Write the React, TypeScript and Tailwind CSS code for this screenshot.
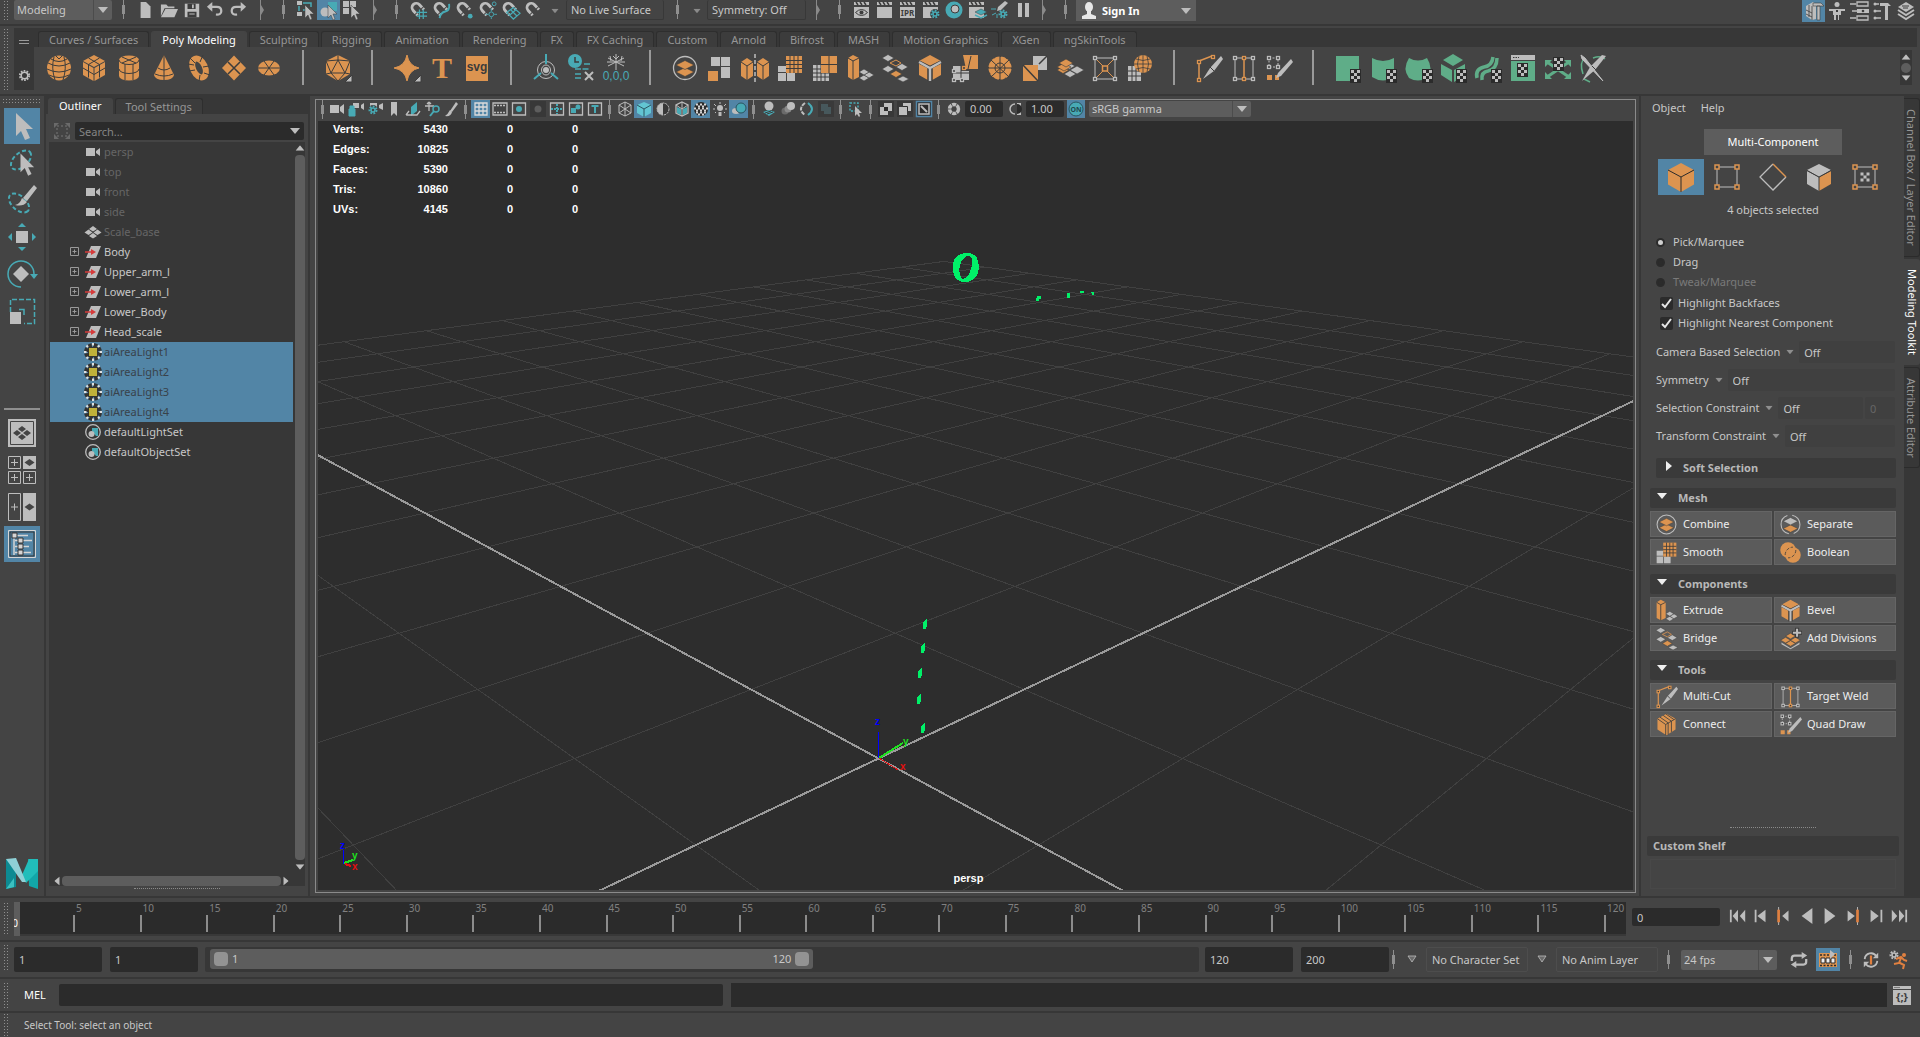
import { useState } from "react";
import type { ReactNode } from "react";
import clsx from "clsx";

const W = "#bdbdbd";
const O = "#dc9450";
const T = "#48aab5";
const G = "#5fad88";
const K = "#3c3c3c";

/* ---------- small building blocks ---------- */

function Svg({ s = 28, vb = 28, className, children }: { s?: number; vb?: number; className?: string; children: ReactNode }) {
  return (
    <svg width={s} height={s} viewBox={`0 0 ${vb} ${vb}`} className={clsx("shrink-0 overflow-visible", className)} fill="none" aria-hidden="true">
      {children}
    </svg>
  );
}

function Grip({ className }: { className?: string }) {
  return (
    <div
      className={clsx(
        "shrink-0 bg-[radial-gradient(#8f8f8f_1px,transparent_1px)] bg-[length:3px_3px]",
        className ?? "ml-[3px] w-[5px] self-stretch",
      )}
    />
  );
}

function Sep({ className }: { className?: string }) {
  return (
    <div className={clsx("flex shrink-0 flex-col items-center justify-center", className)}>
      <div className="h-[5px] w-px bg-[#8f8f8f]" />
      <div className="h-[9px] w-[3px] bg-[#8f8f8f]" />
      <div className="h-[5px] w-px bg-[#8f8f8f]" />
    </div>
  );
}

function Expand({ className }: { className?: string }) {
  return (
    <Svg s={20} vb={20} className={className}>
      <path d="M8.500 0v20" stroke="#8a8a8a" />
      <path d="M9 5l3 5-3 5z" fill="#8a8a8a" />
    </Svg>
  );
}

function Caret({ className, color = W }: { className?: string; color?: string }) {
  return (
    <svg width="10" height="6" viewBox="0 0 10 6" className={clsx("pointer-events-none shrink-0", className)} aria-hidden="true">
      <path d="M0 0h10L5 6z" fill={color} />
    </svg>
  );
}

function Dropdown({ label, value, className }: { label: string; value: string; className: string }) {
  return (
    <div className={clsx("grid shrink-0 grid-cols-[1fr_18px] items-center overflow-hidden rounded-[2px] bg-[#5d5d5d]", className)}>
      <select aria-label={label} className="h-full w-full min-w-0 appearance-none border-r border-[#4c4c4c] bg-transparent pl-[3px] outline-none">
        <option>{value}</option>
      </select>
      <Caret className="justify-self-center" />
    </div>
  );
}

function Field({ label, value, className }: { label: string; value: string; className: string }) {
  return <input aria-label={label} defaultValue={value} className={clsx("shrink-0 rounded-[2px] bg-[#2b2b2b] px-[5px] outline-none", className)} />;
}

function Tool({ label, on, className, children }: { label: string; on?: boolean; className: string; children: ReactNode }) {
  return (
    <button type="button" aria-label={label} className={clsx("flex shrink-0 items-center justify-center", on && "bg-[#5285a6]", className)}>
      {children}
    </button>
  );
}

type Item = [string, ReactNode, boolean?] | null;

/* ---------- icon parts ---------- */

const pointer = <path d="M9 5v13l3-3 2 5 2-1-2-5h4z" fill={W} stroke={K} strokeWidth=".5" />;
const magnet = (
  <g transform="rotate(-42 8 8)" stroke={W} strokeWidth="3">
    <path d="M4 11V7a4.500 4.500 0 0 1 9 0v4" />
    <path d="M4 12v2M13 12v2" />
  </g>
);
const slate = (
  <>
    <path d="M2 2h15v3H2z" fill={W} />
    <path d="M4 2l2 3M8 2l2 3M12 2l2 3" stroke={K} strokeWidth="1.500" />
    <path d="M2 7h15v11H2z" fill={W} />
  </>
);
const gear = (cx: number, cy: number, c: string, r = 3) => (
  <>
    <circle cx={cx} cy={cy} r={r + 1} stroke={c} strokeWidth="2" strokeDasharray="1.800 1.350" />
    <circle cx={cx} cy={cy} r={r - 0.5} stroke={c} strokeWidth="1.600" />
  </>
);
const checker = (x: number, y: number, s = 3) => (
  <g>
    <path d={`M${x - 1} ${y - 1}h${s * 3 + 2}v${s * 4 + 2}h-${s * 3 + 2}z`} fill="#2b2b2b" />
    {[0, 1, 2, 3].flatMap((r) =>
      [0, 1, 2].filter((c) => (r + c) % 2 === 0).map((c) => <rect key={`${r}-${c}`} x={x + c * s} y={y + r * s} width={s} height={s} fill={W} />),
    )}
  </g>
);
const tile = (x: number, y: number, c: string, w = 6, h = 3.5) => (
  <path d={`M${x - w} ${y}L${x} ${y - h}L${x + w} ${y}L${x} ${y + h}z`} fill={c} stroke={K} strokeWidth=".6" />
);
const node = (x: number, y: number, c: string) => <rect x={x - 1.5} y={y - 1.5} width="3" height="3" stroke={c} strokeWidth="1.300" fill={K} />;
const box = (top: string, left: string, right: string) => (
  <>
    <path d="M14 1l11 6-11 6L3 7z" fill={top} />
    <path d="M3 8l10.500 6v13L3 21z" fill={left} />
    <path d="M25 8l-10.500 6v13L25 21z" fill={right} />
  </>
);
const camera = <path d="M1 4h9v8H1zM15 3v10l-4-3V6z" fill={W} />;

const art = {
  sphere: (
    <>
      <ellipse cx="14" cy="14" rx="12" ry="12.500" fill={O} />
      <path d="M3 9q11 6 22 0M2 15q12 6 24 0M4 21q10 5 20 0M9 3q-3 11 1 23M19 3q3 11-1 23M6 5q8 5 16 0M11 2l3 3 3-3" stroke={K} />
    </>
  ),
  cube: (
    <>
      {box(O, O, O)}
      <path d="M8.500 4l11 6.500v13M19.500 4l-11 6.500v13M3 14l11 6.500L25 14" stroke={K} />
    </>
  ),
  cylinder: (
    <>
      <path d="M4 6a10 4.500 0 0 1 20 0v16a10 4.500 0 0 1-20 0z" fill={O} />
      <path d="M4 6a10 4.500 0 0 0 20 0M4 15a10 4.500 0 0 0 20 0M10 10v16M18 10v16M7 3l14 6M21 3L7 9" stroke={K} />
    </>
  ),
  cone: (
    <>
      <path d="M14 1l10 20q-1 5-10 5T4 21z" fill={O} />
      <path d="M8 14q6 4 12 0M14 1v25M5 20q9 4 18 0" stroke={K} />
    </>
  ),
  torus: (
    <>
      <ellipse cx="14" cy="14" rx="6" ry="10" stroke={O} strokeWidth="6" transform="rotate(-25 14 14)" />
      <path d="M5 4l5 5M18 1l-3 7M24 12l-6 1M25 21l-6-2M14 27l1-6M4 17l6-1M3 10l6 1" stroke={K} />
    </>
  ),
  plane: (
    <>
      <path d="M14 1.500L26 14 14 26.500 2 14z" fill={O} />
      <path d="M8 8l12 12M20 8L8 20" stroke={K} strokeWidth="1.500" />
    </>
  ),
  disc: (
    <>
      <ellipse cx="14" cy="14" rx="11" ry="7.500" fill={O} />
      <path d="M3 14h22M9 7l10 14M19 7L9 21" stroke={K} />
    </>
  ),
  platonic: (
    <>
      <path d="M14 1l12 6v13l-12 7-12-7V7z" fill={O} />
      <path d="M14 1v5M2 7l12-1 12 1M2 7l5 12L14 6l7 13 5-12M7 19h14M2 20l5-1 7 8 7-8 5 1" stroke={K} />
      <path d="M28 21v7h-7z" fill={W} stroke={K} />
    </>
  ),
  star: (
    <>
      <path d="M14 1q2 11 12 13-10 2-12 13Q12 16 1 14 12 12 14 1z" fill={O} stroke={O} />
      <path d="M28 21v7h-7z" fill={W} stroke={K} />
    </>
  ),
  type: (
    <text x="14" y="24" fontSize="30" fontWeight="700" textAnchor="middle" fill={O} className="font-['Liberation_Serif',serif]">
      T
    </text>
  ),
  svg: (
    <>
      <path d="M3 2h22v25H3z" fill={O} />
      <text x="14" y="17" fontSize="12" fontWeight="700" textAnchor="middle" fill={K} className="font-['Liberation_Sans',sans-serif]">
        svg
      </text>
    </>
  ),
  pivot: (
    <>
      <circle cx="14" cy="16" r="8.500" stroke={W} />
      <ellipse cx="14" cy="16" rx="4.500" ry="5" stroke={W} />
      <circle cx="14" cy="16" r="3" fill={W} />
      <path d="M14 0v10M9 19l-7 6M19 19l7 6" stroke={T} strokeWidth="2" />
    </>
  ),
  history: (
    <>
      <circle cx="8" cy="7" r="7" fill={T} />
      <path d="M8 3v5h4" stroke={K} strokeWidth="1.500" />
      <path d="M17 10h7M8 15h14M8 20h6M8 24h6" stroke={T} strokeWidth="1.500" strokeDasharray="6 1.500" />
      <path d="M18 18l8 8M26 18l-8 8" stroke={W} strokeWidth="2" />
    </>
  ),
  freeze: (
    <>
      <path d="M14 0v16M6 4l16 8M22 4L6 12M11 2l3 3 3-3M5 8h18M8 2l1 5M20 2l-1 5" stroke={W} />
      <text x="14" y="26" fontSize="12" textAnchor="middle" fill={T} className="font-['Liberation_Sans',sans-serif]">
        0,0,0
      </text>
    </>
  ),
  combine: (
    <>
      <circle cx="14" cy="14" r="11.500" stroke={W} strokeWidth="1.300" />
      {tile(14, 18, O, 9, 4.5)}
      {tile(14, 11, O, 9, 4.5)}
    </>
  ),
  separate: (
    <>
      <circle cx="14" cy="14" r="11.500" stroke={W} strokeWidth="1.300" strokeDasharray="30 6" strokeDashoffset="-20" />
      {tile(14, 19, O, 9, 4.5)}
      {tile(14, 10, W, 9, 4.5)}
    </>
  ),
  extract: (
    <>
      <path d="M5 3h9v9H5zM15 3h9v9h-9zM15 13h9v11h-9z" fill={W} />
      <path d="M2 17h10v10H2z" fill={O} />
    </>
  ),
  mirror: (
    <>
      <path d="M14 0v28" stroke={W} strokeWidth="1.500" strokeDasharray="4 2" />
      {[0, 16].map((x) => (
        <g key={x} transform={`translate(${x} 0)`}>
          <path d="M0 8l6-4 6 4v14l-6 4-6-4z" fill={O} />
          <path d="M0 8l6 4 6-4M6 12v14" stroke={K} />
        </g>
      ))}
    </>
  ),
  smooth: (
    <>
      <path d="M2 12h8v6H2zM2 19h8v8H2zM11 19h8v8h-8z" fill={W} />
      <path d="M10 2h16v17H10z" fill={O} />
      <path d="M14 2v17M18 2v17M22 2v17M10 6.500h16M10 10.500h16M10 14.500h16" stroke={K} />
    </>
  ),
  reduce: (
    <>
      <path d="M2 11h16v16H2z" fill={W} />
      <path d="M6 11v16M10 11v16M14 11v16M2 15h16M2 19h16M2 23h16" stroke={K} />
      <path d="M10 2h16v17H10z" fill={O} />
      <path d="M18 2v17M10 10.500h16" stroke={K} />
    </>
  ),
  extrude: (
    <>
      {tile(18, 24, W, 5, 3)}
      {tile(23, 21, W, 5, 3)}
      {tile(18, 18, W, 5, 3)}
      <path d="M2 4l5-3 6 3v19l-6 3-5-3z" fill={O} />
      <path d="M2 4l5 3 6-3M7 7v19" stroke={K} />
    </>
  ),
  bridge: (
    <>
      {tile(7, 4, W)}
      {tile(7, 15, W)}
      {tile(21, 13, W)}
      {tile(15, 20, O)}
      {tile(22, 25, W, 6, 3)}
      <path d="M9 9l6-3 5 3-5 3z" stroke={O} />
    </>
  ),
  bevel: (
    <>
      {box(O, O, O)}
      <path d="M3 8l10 5v14M25 8l-10 5v14" stroke={K} strokeWidth="3.500" />
      <path d="M3 8l11 6 11-6M14 14v13" stroke={W} strokeWidth="2.500" />
    </>
  ),
  merge: (
    <>
      <path d="M12 1h15v14H15z" fill={O} />
      <path d="M2 12h8v5h8v9H2z" fill={W} />
      <path d="M10 12v14M2 19h16M20 2l-3 13" stroke={K} />
      {node(13, 14, O)}
      {node(3, 17, W)}
      {node(3, 26, W)}
      {node(11, 26, W)}
    </>
  ),
  circularize: (
    <>
      <circle cx="14" cy="14" r="11.500" fill={O} />
      <circle cx="14" cy="14" r="5" stroke={K} />
      <path d="M14 2v24M2 14h24M5 6l18 17M23 6L5 23" stroke={K} />
      <circle cx="14" cy="14" r="11.500" stroke={K} strokeDasharray="1 5" />
    </>
  ),
  flip: (
    <>
      <path d="M12 2h14v14H12z" fill={W} />
      <path d="M2 11h15v16H2z" fill={O} />
      <path d="M2 11l15 16M18 10l8-8" stroke={K} strokeWidth="1.500" />
    </>
  ),
  duplicate: (
    <>
      {tile(14, 20, W)}
      {tile(21, 16, W, 7, 4)}
      {tile(7, 16, O)}
      {tile(13, 12, W)}
      {tile(8, 13, O, 7, 4)}
      {tile(10, 9, O, 7, 4)}
    </>
  ),
  lattice: (
    <>
      <path d="M4 4h20v21H4z" stroke={W} />
      <path d="M5 5l7 7M23 5l-7 7M5 24l7-7M23 24l-7-7" stroke={O} />
      {node(4, 4, W)}
      {node(24, 4, W)}
      {node(4, 25, W)}
      {node(24, 25, W)}
      <rect x="11.500" y="12" width="5" height="5" stroke={O} strokeWidth="1.500" />
    </>
  ),
  sculpt: (
    <>
      <path d="M2 12h13v15H2z" fill={W} />
      <path d="M6 12v15M10 12v15M2 17h13M2 22h13" stroke={K} />
      <circle cx="17" cy="10" r="9" fill={O} />
      <path d="M8 10h18M17 1v18M10 5q7 3 14 0M10 15q7-3 14 0M13 2q-3 8 0 16M21 2q3 8 0 16" stroke={K} strokeWidth=".8" />
    </>
  ),
  multicut: (
    <>
      <path d="M4 8v17M4 7l13-5" stroke={O} strokeWidth="1.500" />
      {node(4, 8, O)}
      {node(4, 26, O)}
      {node(18, 3, O)}
      <path d="M26 2l2 3-9 12-11 8 7-11z" fill={W} />
      <path d="M15 13l4 4" stroke={K} />
    </>
  ),
  weld: (
    <>
      <path d="M5 4v21M23 4v21M5 4h18M5 25h18" stroke={W} />
      <path d="M14 4v21" stroke={O} strokeWidth="1.500" />
      {node(5, 4, W)}
      {node(23, 4, W)}
      {node(5, 25, W)}
      {node(23, 25, W)}
      {node(14, 4, O)}
      {node(14, 25, O)}
    </>
  ),
  quad: (
    <>
      <path d="M4 4h9v9H4z" stroke={W} strokeDasharray="2 1.500" />
      {node(4, 4, W)}
      {node(13, 4, W)}
      {node(4, 13, W)}
      {node(13, 13, W)}
      <path d="M2 21h5v5H2zM10 21h4v5h-4z" fill={O} />
      <path d="M26 5l2 3-12 14-5 2 2-5z" fill={W} />
    </>
  ),
  boolean: (
    <>
      <circle cx="11" cy="11" r="9.500" fill={O} />
      <circle cx="17" cy="17" r="9.500" fill={O} />
      <path d="M20.500 11A9.500 9.500 0 0 1 11 20.500M7.500 17A9.500 9.500 0 0 1 17 7.500" stroke={K} strokeDasharray="4 2" />
    </>
  ),
  divisions: (
    <>
      <path d="M3 19l11 7 11-7v2l-11 6-11-6z" fill={W} />
      {tile(14, 20, O)}
      {tile(8, 16, O)}
      {tile(20, 16, O)}
      {tile(14, 11, O)}
      <path d="M22 1v12M16 7h12" stroke={K} strokeWidth="5" />
      <path d="M22 2v10M17 7h10" stroke={W} strokeWidth="2.500" />
    </>
  ),
  connect: (
    <>
      <path d="M3 7l11-6 11 6v13l-11 7-11-7z" fill={O} />
      <path d="M3 7l10 7 12-7M6 5l10 7v14M10 3l10 7v13M13 14v13M13 1l10 7" stroke={K} />
    </>
  ),
};

const shelf: Item[] = [
  ["Sphere", art.sphere],
  ["Cube", art.cube],
  ["Cylinder", art.cylinder],
  ["Cone", art.cone],
  ["Torus", art.torus],
  ["Plane", art.plane],
  ["Disc", art.disc],
  null,
  ["Platonic Solid", art.platonic],
  null,
  ["Super Shape", art.star],
  ["Type", art.type],
  ["SVG", art.svg],
  null,
  ["Center Pivot", art.pivot],
  ["Delete History", art.history],
  ["Freeze Transformations", art.freeze],
  null,
  ["Combine", art.combine],
  ["Extract", art.extract],
  ["Mirror", art.mirror],
  ["Smooth", art.smooth],
  ["Reduce", art.reduce],
  ["Extrude", art.extrude],
  ["Bridge", art.bridge],
  ["Bevel", art.bevel],
  ["Merge", art.merge],
  ["Circularize", art.circularize],
  ["Flip Triangle", art.flip],
  ["Duplicate Face", art.duplicate],
  ["Lattice", art.lattice],
  ["Sculpt", art.sculpt],
  null,
  ["Multi-Cut", art.multicut],
  ["Target Weld", art.weld],
  ["Quad Draw", art.quad],
  null,
  ["Planar Mapping", <><path d="M2 2h23v25H2z" fill={G} />{checker(17, 16)}</>],
  ["Cylindrical Mapping", <><path d="M3 4q11 6 22 0v19q-11 7-22 0z" fill={G} />{checker(18, 16)}</>],
  ["Spherical Mapping", <><path d="M5 4q9 5 18 0 7 11 0 20-9 5-18 0-7-9 0-20z" fill={G} />{checker(19, 16)}</>],
  ["Automatic Mapping", <><path d="M14 0l10 6-10 6L4 6zM2 10l11 6v12L2 21zM26 10l-11 6v12l11-7z" fill={G} />{checker(18, 16)}</>],
  ["Contour Stretch", <><path d="M3 24q-2-9 7-11 8-1 9-10M8 26q-1-8 6-9 9-2 9-13" stroke={G} strokeWidth="3.500" />{checker(18, 16)}</>],
  ["UV Editor", <><path d="M2 1h24v5H2z" fill={W} /><path d="M4 3.500h6" stroke={K} strokeDasharray="1.500 1" /><path d="M2 7h24v20H2z" fill={G} />{checker(9, 10, 3)}</>],
  ["Unfold", <><path d="M3 8l22 15M25 8L3 23" stroke={G} strokeWidth="3" /><path d="M1 6h7l-7 7zM27 6h-7l7 7zM1 25h7l-7-7zM27 25h-7l7-7z" fill={G} />{checker(10, 4)}</>],
  ["Cut and Sew", <><path d="M4 20Q0 8 6 4M5 25l6 3M14 4q8-3 12 1" stroke={G} strokeWidth="1.500" /><path d="M2 1l4 3 18 23L3 5z" fill={W} stroke={W} /><path d="M27 2L16 16 3 27l8-14L23 1z" fill={W} /><path d="M13 12l4 4" stroke={K} /></>],
];

const mainTools: Item[] = [
  ["New Scene", <path d="M4 1h6l5 5v13H4z" fill={W} />],
  ["Open Scene", <><path d="M1 17V4h6l2 2h7v2H5z" fill={W} /><path d="M6 9h14l-4 9H1z" fill={W} /></>],
  ["Save Scene", <><path d="M2 3h16v15H2z" fill={W} /><path d="M5 3h9v6H5zM5 12h10v6H5z" fill={K} /><path d="M10 4h2v4h-2zM7 14h6v1H7z" fill={W} /></>],
  ["Undo", <><path d="M7 1v11L1 6.500z" fill={W} /><path d="M6 6.500h6q5 0 5 4.500t-6 4" stroke={W} strokeWidth="2.500" /></>],
  ["Redo", <><path d="M13 1v11l6-5.500z" fill={W} /><path d="M14 6.500H8q-5 0-5 4.500t6 4" stroke={W} strokeWidth="2.500" /></>],
];

const selectTools: Item[] = [
  ["Select by hierarchy", <><path d="M1 1h5v4H1zM1 12h5v4H1z" fill={W} /><path d="M7 3h8v4M3 6v5M7 10h3" stroke={T} strokeWidth="1.500" />{pointer}</>],
  ["Select by object", <><path d="M9 2h9v9h-9z" fill={T} /><circle cx="6" cy="12" r="4.500" fill={W} />{pointer}</>, true],
  ["Select by component", <><path d="M1 1h6v6H1zM8 1h6v6H8zM1 8h6v6H1z" fill={W} />{pointer}</>],
];

const snapTools: Item[] = [
  ["Snap to grids", <>{magnet}<path d="M11 9v10M15 9v10M8 12h11M8 16h11" stroke={T} strokeWidth="1.300" /></>],
  ["Snap to curves", <>{magnet}<path d="M8 18q1-6 6-7t4-8" stroke={T} strokeWidth="2" /></>],
  ["Snap to points", <>{magnet}<circle cx="16" cy="16" r="2.500" fill={T} /></>],
  ["Snap to center", <>{magnet}<circle cx="17" cy="3" r="2" stroke={T} /><circle cx="14" cy="14" r="2.500" stroke={T} /><path d="M14 8v3M14 17v2M8 14h3M17 14h3" stroke={T} /></>],
  ["Snap to planes", <>{magnet}<path d="M6 12l7-5 7 6-7 6zM10 9l7 7M16 9l-7 6" stroke={T} strokeWidth="1.300" /></>],
  ["Make live", magnet],
];

const renderTools: Item[] = [
  ["Render view", <>{slate}<path d="M3.500 12.500q6-6 12 0-6 6-12 0z" stroke={K} /><circle cx="9.500" cy="12.500" r="2" fill={K} /></>],
  ["Render frame", slate],
  ["IPR render", <>{slate}<text x="9.500" y="16" fontSize="8" fontWeight="700" textAnchor="middle" fill={K}>IPR</text></>],
  ["Render settings", <>{slate}<circle cx="14" cy="14" r="5" fill={K} />{gear(14, 14, T, 2.5)}</>],
  ["Hypershade", <><circle cx="10" cy="10" r="8.500" fill={T} /><circle cx="11" cy="9" r="4" fill={W} stroke={K} /></>],
  ["Render setup", <>{slate}<path d="M8 12l6-3 6 3-6 3z" fill={T} stroke={K} strokeWidth=".5" /><path d="M8 15l6 3 6-3" stroke={T} strokeWidth="1.500" /></>],
  ["Light editor", <><path d="M15 1l3 2-7 7-4 1 1-4z" fill={W} /><path d="M1 9h5M2 15l4-2M7 18v-4" stroke={T} />{gear(13, 14, T, 2.5)}</>],
  ["Pause", <path d="M5 3h4v14H5zM12 3h4v14h-4z" fill={W} />],
];

const rightTools: Item[] = [
  ["Modeling Toolkit", <><path d="M2 5l7-4 3 2v15l-4 1-6-4z" fill={W} /><path d="M2 9l6 3M2 13l6 3M8 5v14M5 4v12" stroke={K} strokeWidth=".8" /><path d="M9 2h8l3 3H9zM13 5h3v14h-3z" fill={W} stroke={K} strokeWidth=".6" /></>, true],
  ["Character controls", <><circle cx="10" cy="3.500" r="2.500" fill={W} /><path d="M2 8h16v2H2zM6 8h8v6h-2v5h-1v-5H9v5H7v-5H6z" fill={W} /><path d="M9 9h2v2H9z" fill={K} /></>],
  ["Channel Box", <><path d="M7 1h11v4H7zM7 15h11v4H7z" stroke={W} strokeWidth="1.300" /><path d="M0 3h6M2 10h5M0 17h6" stroke={W} strokeWidth="1.500" /><path d="M7 8h12v4H7z" fill={W} /><circle cx="13" cy="10" r="1.300" fill={K} /></>],
  ["Attribute Editor", <><path d="M1 3h5M1 10h7M1 17h7" stroke={W} strokeWidth="1.300" /><circle cx="2" cy="3" r="1.500" fill={W} /><circle cx="2" cy="10" r="1.500" fill={W} /><circle cx="2" cy="17" r="1.500" fill={W} /><path d="M7 2h8l3 3H7zM12 5h3v14h-3z" fill={W} /></>],
  ["Display layers", <><path d="M10 1l8 5-8 5-8-5z" fill={W} /><path d="M2 9l8 5 8-5M2 13l8 5 8-5" stroke={W} strokeWidth="2" /><path d="M6 5h7M7 7h5" stroke={K} /></>],
];

const panelTools: Item[] = [
  ["Select camera", camera],
  ["Lock camera", <><path d="M5 2h6v5H5zM16 2v7l-3-2V4z" fill={W} /><path d="M1 8h6v7H1zM2 8V5h4v3" fill={T} stroke={T} /></>],
  ["Camera attributes", <><path d="M3 2h7v4H3zM16 2v7l-4-2V4z" fill={W} /><circle cx="6" cy="9" r="5" fill="#444" />{gear(6, 9, T, 2.5)}</>],
  ["Bookmarks", <path d="M5 1h6v14l-3-3-3 3z" fill={W} />],
  ["Image plane", <><path d="M6 6l6-5v9l-6 5z" fill={T} /><path d="M1 14h11l3-4M4 10l-3 4" stroke={W} strokeWidth="1.300" /></>],
  ["2D pan/zoom", <><path d="M5 1v9M1 5h9M5 1L3 3M5 1l2 2" stroke={W} strokeWidth="1.300" /><circle cx="12" cy="8" r="3" stroke={T} strokeWidth="1.500" /><path d="M10 10l-4 5" stroke={T} strokeWidth="2" /></>],
  ["Grease pencil", <><path d="M13 1l2 2-6 8-2-1z" fill={W} /><path d="M7 9l2 2q-1 5-7 4 3-2 5-6z" fill={W} /></>],
  null,
  ["Grid", <path d="M2 2h12v12H2zM6 2v12M10 2v12M2 6h12M2 10h12" stroke="#dcdcdc" strokeWidth="1.300" />, true],
  ["Film gate", <><path d="M1 2h14v12H1z" stroke={W} strokeWidth="1.300" /><path d="M2 4.500h12M2 11.500h12" stroke={W} strokeWidth="1.500" strokeDasharray="2 1" /></>],
  ["Resolution gate", <><path d="M1.500 2h13v12h-13z" stroke={W} strokeWidth="1.300" /><circle cx="8" cy="8" r="3" fill={T} /></>],
  ["Gate mask", <><path d="M0 0h16v16H0z" fill="#383838" /><circle cx="8" cy="8" r="3.500" fill="#5d5d5d" /></>],
  ["Field chart", <><path d="M1.500 2h13v12h-13z" stroke={W} strokeWidth="1.300" /><path d="M8 3v10M2 8h12" stroke={T} strokeWidth="2" strokeDasharray="2 1" /></>],
  ["Safe action", <><path d="M1.500 2h13v12h-13z" stroke={W} strokeWidth="1.300" /><path d="M3 12V7h5v5z" fill={T} /><circle cx="10" cy="6" r="2.500" fill={T} /></>],
  ["Safe title", <><path d="M1.500 2h13v12h-13z" stroke={W} strokeWidth="1.300" /><path d="M4.500 5h7M8 5v7" stroke={T} strokeWidth="2" /></>],
  null,
  ["Wireframe", <path d="M8 1l6 3v8l-6 3-6-3V4zM2 4l6 4 6-4M8 8v7M2 12l6-4 6 4M8 1v7" stroke={W} />],
  ["Smooth shade", <><path d="M8 1l7 3v8l-7 4-7-4V4z" fill="#62c5d2" /><path d="M1 4l7 4 7-4M8 8v8" stroke="#2b5560" /></>, true],
  ["Default material", <><circle cx="8" cy="8" r="6" fill={W} /><path d="M8 2a6 6 0 0 1 0 12z" fill="#383838" /><circle cx="8" cy="8" r="6" stroke={W} strokeDasharray="2 1" /></>],
  ["Wireframe on shaded", <><path d="M8 1l6 3v8l-6 3-6-3V4z" fill="#3a3a3a" stroke={W} strokeWidth="1.300" /><path d="M3 6l4 2v6l-4-2zM13 6L9 8v6l4-2z" fill={T} /><path d="M2 4l6 4 6-4M8 1v14" stroke={W} /></>],
  ["Textured", <><circle cx="8" cy="8" r="7" fill="#2b2b2b" /><path d="M3 3.500h10M1 7.500h14M3 11.500h10" stroke="#d5d5d5" strokeWidth="2" strokeDasharray="2 2" /><path d="M5 5.500h8M3 9.500h12M5 13.500h6" stroke="#d5d5d5" strokeWidth="2" strokeDasharray="2 2" /></>, true],
  ["Use all lights", <><circle cx="8" cy="7" r="3" fill={W} /><path d="M6.500 11h3v4h-3z" fill={W} /><path d="M8 1v2M2 3l2 2M14 3l-2 2M1 8h2M13 8h2M3 12l1-1M13 12l-1-1" stroke={W} /></>],
  ["Shadows", <><ellipse cx="5" cy="10" rx="4" ry="3" fill={W} /><circle cx="10" cy="7" r="5" fill={T} stroke="#2b5560" /></>, true],
  null,
  ["Ambient occlusion", <><circle cx="8" cy="5" r="4.500" fill={W} /><path d="M2 11l6-2 6 2-6 4z" fill={T} /><path d="M4 12l6-2M6 13l6-2" stroke={K} /></>],
  ["Motion blur", <><circle cx="5" cy="10" r="3.500" fill="#6a6a6a" /><circle cx="8" cy="8" r="3.500" fill="#8a8a8a" /><circle cx="11" cy="5" r="4" fill={W} /></>],
  ["Anti-aliasing", <><path d="M6 2q-8 6 0 12" stroke={W} strokeWidth="2" strokeDasharray="4 1" /><path d="M9 2q8 6 0 12" stroke={T} strokeWidth="2" /></>],
  ["Depth of field", <><path d="M0 0h16v16H0z" fill="#3a3a3a" /><path d="M3 3h7v7H3zM6 6h7v7H6z" fill="#47585c" /></>],
  null,
  ["Isolate select", <><path d="M2 2h8v8H2z" stroke={T} strokeWidth="1.500" strokeDasharray="2 1.500" /><path d="M7 5v10l2-2 2 3 1-1-1-3h3z" fill={W} /></>],
  null,
  ["X-ray", <><path d="M0 0h16v16H0z" fill="#383838" /><path d="M6 2h8v8H6zM2 6h8v8H2z" fill={W} /><path d="M6 6h4v4H6z" fill="#2b2b2b" /></>],
  ["X-ray joints", <><path d="M0 0h16v16H0z" fill="#383838" /><path d="M6 2h8v8H6zM2 6h8v8H2z" fill={W} /><path d="M6 5.500h4.500V10" stroke="#2b2b2b" /></>],
  ["X-ray active", <><path d="M.5.5h15v15H.5z" fill="#2b2b2b" stroke="#5285a6" strokeWidth="1.500" /><path d="M3 3h10v10H3z" stroke={W} strokeWidth="1.500" /><path d="M5 5l6 6" stroke={W} strokeWidth="2" /></>],
];

function ToolRow({ items, cell, size, vb }: { items: Item[]; cell: string; size: number; vb: number }) {
  return (
    <>
      {items.map((item, i) =>
        item ? (
          <Tool key={i} label={item[0]} on={item[2]} className={cell}>
            <Svg s={size} vb={vb}>{item[1]}</Svg>
          </Tool>
        ) : (
          <Sep key={i} className="w-[11px]" />
        ),
      )}
    </>
  );
}

/* ---------- top bars ---------- */

function StatusLine() {
  return (
    <header className="flex h-6 shrink-0 items-start">
      <Grip className="ml-[3px] h-5 w-[5px]" />
      <Dropdown label="Menu set" value="Modeling" className="ml-[6px] h-5 w-[98px]" />
      <Sep className="w-[22px]" />
      <ToolRow items={mainTools} cell="h-5 w-[23px]" size={18} vb={20} />
      <Expand className="ml-[3px]" />
      <Sep className="w-[22px]" />
      <ToolRow items={selectTools} cell="h-5 w-[23px]" size={20} vb={20} />
      <Expand className="ml-[2px]" />
      <Sep className="w-[22px]" />
      <ToolRow items={snapTools} cell="h-5 w-[23px]" size={19} vb={20} />
      <Caret className="mt-2 mr-[6px] ml-[5px] scale-75" color="#8a8a8a" />
      <input aria-label="Live surface" defaultValue="No Live Surface" className="h-5 w-[98px] rounded-[2px] border border-t-0 border-[#383838] pl-1 outline-none" />
      <Sep className="w-[26px]" />
      <Caret className="mt-2 mr-[5px] ml-[2px] scale-75" color="#8a8a8a" />
      <input aria-label="Symmetry" defaultValue="Symmetry: Off" className="h-5 w-[99px] rounded-[2px] border border-t-0 border-[#383838] pl-1 outline-none" />
      <Expand className="ml-[2px]" />
      <Sep className="mx-1 w-[14px]" />
      <ToolRow items={renderTools} cell="h-5 w-[23px]" size={20} vb={20} />
      <Expand />
      <Sep className="w-[22px]" />
      <button type="button" className="flex h-[21px] w-[120px] items-center bg-[#5d5d5d] px-[5px] font-bold text-white">
        <Svg s={18} vb={18}>
          <ellipse cx="8" cy="5" rx="4" ry="5" fill="#e8e8e8" />
          <path d="M6 9h4v3l5 2v3H1v-3l5-2z" fill="#e8e8e8" />
        </Svg>
        <span className="ml-[3px] grow text-left">Sign In</span>
        <Caret />
      </button>
      <div className="ml-auto flex pr-[3px]">
        <ToolRow items={rightTools} cell="h-[22px] w-[23px]" size={20} vb={20} />
      </div>
    </header>
  );
}

const shelfTabs = ["Curves / Surfaces", "Poly Modeling", "Sculpting", "Rigging", "Animation", "Rendering", "FX", "FX Caching", "Custom", "Arnold", "Bifrost", "MASH", "Motion Graphics", "XGen", "ngSkinTools"];

function Shelf() {
  const [tab, setTab] = useState("Poly Modeling");
  return (
    <section className="flex h-[70px] shrink-0 border-t-2 border-[#373737] pt-[2px] pb-1">
      <Grip />
      <div className="ml-[6px] flex w-5 flex-col items-center justify-between bg-[#373737] pt-3 pb-2">
        <div className="h-1 w-[10px] border-y border-[#9a9a9a]" />
        <Svg s={13} vb={14}>{gear(7, 7, W, 4)}</Svg>
      </div>
      <div className="min-w-0 grow">
        <nav className="mr-[3px] flex h-[19px] items-end gap-[2px] bg-[#373737] pl-1">
          {shelfTabs.map((t) => (
            <button
              type="button"
              key={t}
              onClick={() => setTab(t)}
              className={clsx(
                "h-4 shrink-0 rounded-t-[3px] border border-b-0 px-[10px] leading-4 whitespace-nowrap",
                t === tab ? "border-[#444444] bg-[#444444] text-white" : "border-[#2e2e2e] bg-[#3c3c3c] text-[#969696]",
              )}
            >
              {t}
            </button>
          ))}
        </nav>
        <div className="flex h-[41px] items-center pl-[7px]">
          {shelf.map((item, i) =>
            item ? (
              <Tool key={i} label={item[0]} className="h-10 w-[35px]">
                <Svg>{item[1]}</Svg>
              </Tool>
            ) : (
              <div key={i} className="mx-4 h-[35px] w-[2px] shrink-0 bg-[#9a9a9a]" />
            ),
          )}
          <div className="mr-2 ml-auto flex h-[35px] w-3 flex-col items-center justify-between bg-[#373737] py-1">
            <Caret className="rotate-180 scale-90" />
            <div className="size-[10px] rounded-full bg-[#5d5d5d]" />
            <Caret className="scale-90" />
          </div>
        </div>
      </div>
    </section>
  );
}

/* ---------- left side ---------- */

const bigPointer = "M10 3v22l5-5 4 9 4-2-4-8h7z";

function Toolbox() {
  return (
    <aside className="flex w-11 shrink-0 flex-col items-center">
      <Grip className="mt-[2px] h-[5px] w-10" />
      <div className="mt-[5px] flex flex-col gap-px">
        <Tool label="Select" on className="size-9"><Svg s={36} vb={36}><path d="M12 5v23l5-5 4 9 5-2-4-9h7z" fill={W} /></Svg></Tool>
        <Tool label="Lasso" className="size-9">
          <Svg s={36} vb={36}>
            <ellipse cx="17" cy="15" rx="12" ry="7" stroke={T} strokeWidth="2" strokeDasharray="4 2.500" transform="rotate(-42 17 15)" />
            <path d={bigPointer} transform="translate(8 6) scale(.85)" fill={W} />
          </Svg>
        </Tool>
        <Tool label="Paint selection" className="size-9">
          <Svg s={36} vb={36}>
            <ellipse cx="15" cy="21" rx="12" ry="7" stroke={T} strokeWidth="2" strokeDasharray="4 2.500" transform="rotate(42 15 21)" />
            <path d="M30 3l3 3-10 13-4-3zM18 16l5 4q-4 5-12 3 5-1 7-7z" fill={W} />
          </Svg>
        </Tool>
        <Tool label="Move" className="size-9">
          <Svg s={36} vb={36}>
            <path d="M12 12h12v12H12z" fill={W} />
            <path d="M18 4l4 4h-8zM18 32l4-4h-8zM4 18l4-4v8zM32 18l-4-4v8z" fill={T} />
          </Svg>
        </Tool>
        <Tool label="Rotate" className="size-9">
          <Svg s={36} vb={36}>
            <path d="M17 10l8 8-8 8-8-8z" fill={W} />
            <path d="M17 31A13 13 0 1 1 30 18" stroke={T} strokeWidth="1.500" />
            <path d="M26 18h8l-4 5z" fill={T} />
          </Svg>
        </Tool>
        <Tool label="Scale" className="size-9">
          <Svg s={36} vb={36}>
            <path d="M6.500 19V6.500h24v24H20" stroke={T} strokeWidth="1.500" strokeDasharray="5 2" />
            <path d="M15 16.500h5V22" stroke={T} strokeWidth="1.500" />
            <path d="M6 19h11v12H6z" fill={W} />
          </Svg>
        </Tool>
      </div>
      <div className="mt-[79px] h-[2px] w-9 bg-[#8f8f8f]" />
      <div className="mt-[5px] flex flex-col gap-px">
        <Tool label="Single pane" className="size-9">
          <Svg s={36} vb={36}>
            <path d="M4 4h28v28H4z" fill={W} />
            <path d="M6.500 6.500h23v23h-23z" stroke="#444" />
            <g fill="#444"><path d="M18 11l4 3-4 3-4-3zM18 19l4 3-4 3-4-3zM13 15l4 3-4 3-4-3zM23 15l4 3-4 3-4-3z" /></g>
          </Svg>
        </Tool>
        <Tool label="Four panes" className="size-9">
          <Svg s={36} vb={36}>
            <path d="M4.500 4.500h12v12h-12zM4.500 19.500h12v12h-12zM19.500 19.500h12v12h-12z" stroke={W} />
            <path d="M7 10.500h7M10.500 7v7M7 25.500h7M10.500 22v7M22 25.500h7M25.500 22v7" stroke={W} />
            <path d="M19 4h13v13H19z" fill={W} />
            <path d="M25.500 7l5 3.500-5 3.500-5-3.500z" fill="#444" />
          </Svg>
        </Tool>
        <Tool label="Two panes" className="size-9">
          <Svg s={36} vb={36}>
            <path d="M4.500 4.500h12v27h-12zM7 18h7M10.500 14.500v7" stroke={W} />
            <path d="M19 4h13v28H19z" fill={W} />
            <path d="M25.500 14.500l5 3.500-5 3.500-5-3.500z" fill="#444" />
          </Svg>
        </Tool>
        <Tool label="Outliner view" on className="size-9">
          <Svg s={36} vb={36}>
            <path d="M4.500 4.500h27v27h-27z" stroke="#d5d5d5" />
            <path d="M6 6h24v24H6z" stroke="#333" />
            <path d="M10 11v18M11 14.500h5M11 20.500h5M11 26.500h5M12 9.500h12M18 14.500h10M18 20.500h7M18 26.500h9" stroke="#d5d5d5" strokeWidth="1.500" />
            <path d="M8 7h5v5H8zM14 12h5v5h-5zM14 18h5v5h-5zM14 24h5v5h-5z" fill="#d5d5d5" stroke="#333" />
          </Svg>
        </Tool>
      </div>
      <svg width="32" height="31" viewBox="0 0 32 31" className="mt-auto mb-[7px]" role="img" aria-label="Maya">
        <path d="M0 1h10v28L0 31z" fill="#0d8a92" />
        <path d="M22 1h10v30l-9-3z" fill="#12a6a8" />
        <path d="M32 1v12L20 25l-4-8 7-16z" fill="#21bdba" />
        <path d="M0 1l10-1 10 24h-4z" fill="#8fd0d6" />
        <path d="M0 31l8-11v9z" fill="#3cc0c0" />
      </svg>
    </aside>
  );
}

type Node = { name: string; kind: "camera" | "plane" | "group" | "light" | "set" };

const nodes: Node[] = [
  { name: "persp", kind: "camera" },
  { name: "top", kind: "camera" },
  { name: "front", kind: "camera" },
  { name: "side", kind: "camera" },
  { name: "Scale_base", kind: "plane" },
  { name: "Body", kind: "group" },
  { name: "Upper_arm_l", kind: "group" },
  { name: "Lower_arm_l", kind: "group" },
  { name: "Lower_Body", kind: "group" },
  { name: "Head_scale", kind: "group" },
  { name: "aiAreaLight1", kind: "light" },
  { name: "aiAreaLight2", kind: "light" },
  { name: "aiAreaLight3", kind: "light" },
  { name: "aiAreaLight4", kind: "light" },
  { name: "defaultLightSet", kind: "set" },
  { name: "defaultObjectSet", kind: "set" },
];

const nodeArt = {
  camera: <path d="M2 5h9v8H2zM16 5v8l-4-3V8z" fill={W} />,
  plane: <path d="M9 3l4 3-4 2.500L5 6zM9 10l4 3-4 2.500L5 13zM4.500 6.500l4 3-4 2.500-4-2.500zM13.500 6.500l4 3-4 2.500-4-2.500z" fill={W} />,
  group: (
    <>
      <path d="M7 3h10l-5 12H2z" fill={W} />
      <path d="M1 9h8" stroke="#d63c3c" strokeWidth="1.500" />
      <path d="M7 6l5 3-5 3z" fill="#d63c3c" />
    </>
  ),
  light: (
    <>
      <circle cx="9" cy="9" r="7" stroke="#333" strokeWidth="4" strokeDasharray="4 1.500" />
      <path d="M9 0v2.500M9 15.500V18M0 9h2.500M15.500 9H18M2.500 2.500l1.500 1.500M14 14l1.500 1.500M15.500 2.500L14 4M4 14l-1.500 1.500" stroke="#e0e0e0" strokeWidth="2" />
      <path d="M4.500 4.500h9v9h-9z" fill="#c0b13a" stroke="#333" />
    </>
  ),
  set: (
    <>
      <circle cx="9" cy="9" r="7.300" stroke={W} strokeWidth="1.300" />
      <path d="M8 5h6v8h-2l-4-5z" fill={T} />
      <circle cx="7.500" cy="11" r="3" fill={W} />
    </>
  ),
};

function Outliner() {
  return (
    <section className="flex w-[266px] shrink-0 flex-col border-x-2 border-[#373737]">
      <div className="flex h-[18px] items-end gap-[2px] bg-[#373737] pl-[2px]">
        <button type="button" className="h-4 rounded-t-[3px] bg-[#444444] px-[11px] leading-4 text-white">Outliner</button>
        <button type="button" className="h-4 rounded-t-[3px] border border-b-0 border-[#2e2e2e] bg-[#3c3c3c] px-[10px] leading-4 text-[#969696]">Tool Settings</button>
      </div>
      <div className="mt-2 flex h-[18px] items-center pr-1 pl-[7px]">
        <Svg s={18} vb={18}>
          <path d="M4 4h10v10H4z" stroke="#777" strokeDasharray="2 2" />
          <path d="M1 1h5L1 6zM17 1v5l-5-5zM1 17v-5l5 5zM17 17h-5l5-5z" fill="#6a6a6a" />
        </Svg>
        <div className="ml-1 flex h-full grow items-center rounded-[2px] bg-[#2b2b2b] pr-1">
          <input aria-label="Search" placeholder="Search..." className="h-full min-w-0 grow bg-transparent pl-1 outline-none placeholder:text-[#858585]" />
          <Caret />
        </div>
      </div>
      <div className="mx-[3px] mt-[2px] flex min-h-0 grow bg-[#373737] pl-px">
        <div className="flex min-w-0 grow flex-col">
          <ul className="grow overflow-hidden">
            {nodes.map((n) => (
              <li
                key={n.name}
                className={clsx(
                  "flex h-5 items-center pl-5",
                  n.kind === "light" && "bg-[#5285a6] text-[#39424a]",
                  (n.kind === "camera" || n.kind === "plane") && "text-[#666666]",
                  (n.kind === "group" || n.kind === "set") && "text-[#c8c8c8]",
                )}
              >
                <span className="flex w-[14px] items-center">
                  {n.kind === "group" && (
                    <Svg s={10} vb={10}><path d="M.5.5h8v8h-8zM2.500 4.500h4M4.500 2.500v4" stroke="#9a9a9a" /></Svg>
                  )}
                </span>
                <Svg s={18} vb={18}>{nodeArt[n.kind]}</Svg>
                <span className="ml-[2px]">{n.name}</span>
              </li>
            ))}
          </ul>
          <div className="flex h-[10px] items-center justify-between px-[2px]">
            <Caret className="rotate-90 scale-90" />
            <div className="h-[10px] grow rounded-[4px] bg-[#5d5d5d]" />
            <Caret className="-rotate-90 scale-90" />
          </div>
        </div>
        <div className="ml-[2px] flex w-[10px] flex-col items-center pt-[3px] pb-4">
          <Caret className="rotate-180 scale-90" />
          <div className="my-1 w-[10px] grow rounded-[4px] bg-[#5d5d5d]" />
          <Caret className="scale-90" />
        </div>
      </div>
      <div className="mx-auto mt-[2px] mb-[7px] h-px w-[86px] border-t border-dotted border-[#8a8a8a]" />
    </section>
  );
}

/* ---------- viewport ---------- */

// Ground plane projection: rows share i + j, so depth only depends on the sum.
const DEPTH = 8.869;
const project = (i: number, j: number) => {
  const d = DEPTH + i + j;
  return `${(968.2 + (1348 * (i - j) - 795) / d).toFixed(1)} ${(77.7 + 6038 / d).toFixed(1)}`;
};
const lines = Array.from({ length: 25 }, (_, k) => k - 12).map((i) => {
  const near = Math.max(-12, -7.5 - i);
  return { i, d: `M${project(i, near)}L${project(i, 12)}M${project(near, i)}L${project(12, i)}` };
});

const stats = [
  ["Verts:", "5430"],
  ["Edges:", "10825"],
  ["Faces:", "5390"],
  ["Tris:", "10860"],
  ["UVs:", "4145"],
];

function Viewport() {
  return (
    <main className="flex min-w-0 grow flex-col p-[3px] pl-[5px]">
      <div className="flex min-h-0 grow flex-col border border-[#8a8a8a] px-[2px] pb-[2px]">
        <div className="flex h-[21px] shrink-0 items-start">
          <Sep className="w-[9px]" />
          <ToolRow items={panelTools} cell="h-[18px] w-[19px]" size={16} vb={16} />
          <Sep className="w-[11px]" />
          <Tool label="Exposure" className="h-[18px] w-5">
            <Svg s={16} vb={16}>
              <circle cx="8" cy="8" r="4.500" stroke={W} strokeWidth="3.500" strokeDasharray="4 .7" />
            </Svg>
          </Tool>
          <Field label="Exposure value" value="0.00" className="mt-px ml-px h-4 w-[38px]" />
          <Tool label="Gamma" className="ml-[3px] h-[18px] w-5">
            <Svg s={16} vb={16}>
              <path d="M9 2h4v12H9z" fill={W} />
              <path d="M9 3a5 5 0 0 1 0 10" fill="#2b2b2b" />
              <path d="M7 3a5 5 0 0 0 0 10" stroke={W} strokeWidth="1.500" />
            </Svg>
          </Tool>
          <Field label="Gamma value" value="1.00" className="mt-px h-4 w-[38px]" />
          <Tool label="Color management" on className="ml-[3px] size-[18px]">
            <Svg s={16} vb={16}>
              <circle cx="8" cy="8" r="7" fill={T} stroke="#2b5560" />
              <text x="8" y="11" fontSize="7" fontWeight="700" textAnchor="middle" fill="#23484f">ON</text>
            </Svg>
          </Tool>
          <Dropdown label="View transform" value="sRGB gamma" className="mt-px ml-1 h-4 w-[162px]" />
        </div>
        <div className="relative min-h-0 grow overflow-hidden bg-[#2d2d2d]">
          <svg viewBox="318 121 1315 769" preserveAspectRatio="xMidYMid slice" className="absolute inset-0 size-full" fill="none" shapeRendering="crispEdges">
            {lines.map((l) => l.i !== 0 && <path key={l.i} d={l.d} stroke="#404040" />)}
            <path d={lines[12].d} stroke="#9a9a9a" strokeWidth="2" />
            <path
              d="M965 253q8-1 12 5 3 7 1 15-4 9-13 9-8 0-11-7-3-8 0-15 3-6 11-7zM967 256q-5 2-7 9-2 9 2 14 5 0 8-7 4-10 1-15-2-2-4-1z"
              fill="#00f068"
              fillRule="evenodd"
            />
            <g fill="#00f068">
              <path d="M1037 296h4v3h-2v2h-3v-3h1zM1067 293h3v5h-3zM1080 291h4v2h-4zM1091 292h3v3h-2v-2h-1z" />
              {[[925, 624], [923, 648], [920, 673], [919, 699], [923, 728]].map(([x, y]) => (
                <path key={y} d={`M${x - 2} ${y - 2}l4-3v7l-1 3h-3z`} />
              ))}
            </g>
            <path d="M878.500 758v-26M343.500 864v-14" stroke="#0000ff" />
            <path d="M879 758l24-15" stroke="#20e020" strokeWidth="2" />
            <path d="M879 758l19 12" stroke="#e01010" strokeWidth="1" />
            <path d="M344 863l9-3" stroke="#20e020" strokeWidth="2" />
            <path d="M345 864l6 2" stroke="#e01010" strokeWidth="2" />
            <g fontSize="10" fontWeight="700" className="font-['Liberation_Sans',sans-serif]">
              <text x="875" y="725" fill="#0000ff">z</text>
              <text x="903" y="745" fill="#20e020">y</text>
              <text x="900" y="770" fill="#e01010">x</text>
              <text x="340" y="849" fill="#0000ff">z</text>
              <text x="352" y="859" fill="#20e020">y</text>
              <text x="352" y="870" fill="#e01010">x</text>
            </g>
          </svg>
          <table className="absolute top-0 left-[15px] font-['Liberation_Sans',Arial,sans-serif] text-[11px] leading-5 font-bold text-white">
            <tbody>
              {stats.map(([label, n]) => (
                <tr key={label} className="h-5 align-top">
                  <th scope="row" className="w-[55px] p-0 text-left leading-4">{label}</th>
                  <td className="w-[60px] p-0 text-right leading-4">{n}</td>
                  <td className="w-[65px] p-0 text-right leading-4">0</td>
                  <td className="w-[65px] p-0 text-right leading-4">0</td>
                </tr>
              ))}
            </tbody>
          </table>
          <span className="absolute bottom-1 left-1/2 -ml-[22px] font-['Liberation_Sans',Arial,sans-serif] font-bold text-white">persp</span>
        </div>
      </div>
    </main>
  );
}

/* ---------- modeling toolkit ---------- */

function Constraint({ label, value, extra }: { label: string; value: string; extra?: string }) {
  return (
    <div className="flex h-[22px] items-center pr-px">
      <button type="button" className="flex items-center gap-[5px] whitespace-nowrap">
        {label}
        <Caret className="scale-75" color="#8f8f8f" />
      </button>
      <input aria-label={label} defaultValue={value} className="ml-1 h-full min-w-0 grow rounded-[2px] bg-[#404040] pl-[5px] outline-none" />
      {extra && <input aria-label={`${label} amount`} defaultValue={extra} disabled className="ml-[2px] h-full w-[30px] rounded-[2px] bg-[#404040] pl-[5px] text-[#666666]" />}
    </div>
  );
}

function Group({ title, items }: { title: string; items: [string, ReactNode][] }) {
  return (
    <section className="mt-[9px]">
      <button type="button" className="flex h-5 w-full items-center rounded-[2px] bg-[#3a3a3a] pl-[7px] font-bold text-[#b8b8b8]">
        <Caret className="mb-1" color="#eeeeee" />
        <span className="ml-[11px]">{title}</span>
      </button>
      <div className="mt-[3px] grid grid-cols-2 gap-[2px]">
        {items.map(([name, icon]) => (
          <button type="button" key={name} className="flex h-[26px] items-center border border-[#656565] bg-[#5b5b5b] pl-1 text-[#eeeeee]">
            <Svg s={23}>{icon}</Svg>
            <span className="ml-[5px]">{name}</span>
          </button>
        ))}
      </div>
    </section>
  );
}

const modes: [string, ReactNode][] = [
  ["Object", <><path d="M14 0l13 7v14.500L14 29 1 21.500V7z" fill={O} /><path d="M1 7l13 7 13-7M14 14v15" stroke="#2b2b2b" /></>],
  ["Vertex", <><path d="M4 4h20v20H4z" stroke={W} /><g stroke={O} strokeWidth="1.500" fill="#444"><path d="M2 2h4v4H2zM22 2h4v4h-4zM2 22h4v4H2zM22 22h4v4h-4z" /></g></>],
  ["Edge", <><path d="M14 1L1 14l13 13 13-13" stroke={W} strokeWidth="1.300" /><path d="M14 1l13 13" stroke={O} strokeWidth="1.500" /></>],
  ["Face", <><path d="M14 1l12 6-12 7L2 7z" fill={W} /><path d="M2 8l12 6.500V28L2 21z" fill={W} /><path d="M26 8l-12 6.500V28l12-7z" fill={O} /><path d="M2 7.500l12 6.500 12-6.500M14 14v14" stroke={K} /></>],
  ["UV", <><path d="M4 4h20v20H4z" stroke={W} /><g stroke={O} strokeWidth="1.500" fill="#444"><path d="M2 2h4v4H2zM22 2h4v4h-4zM2 22h4v4H2zM22 22h4v4h-4z" /></g><path d="M9.500 9.500h3v3h-3zM15.500 9.500h3v3h-3zM12.500 12.500h3v3h-3zM9.500 15.500h3v3h-3zM15.500 15.500h3v3h-3z" fill={W} /></>],
];

function Toolkit() {
  return (
    <aside className="flex w-[265px] shrink-0 flex-col border-l-2 border-[#373737] pr-2 pl-[9px]">
      <nav className="mt-1 flex gap-[15px] pl-[2px]">
        <button type="button">Object</button>
        <button type="button">Help</button>
      </nav>
      <button type="button" className="mx-auto mt-[13px] h-[26px] w-[138px] shrink-0 bg-[#5d5d5d] text-white">Multi-Component</button>
      <div className="mx-2 mt-1 flex">
        {modes.map(([name, icon], i) => (
          <Tool key={name} label={name} on={i === 0} className="h-9 w-[46px]">
            <Svg>{icon}</Svg>
          </Tool>
        ))}
      </div>
      <p className="mt-[7px] text-center leading-4">4 objects selected</p>
      <fieldset className="mt-[14px] pl-[6px]">
        {["Pick/Marquee", "Drag", "Tweak/Marquee"].map((name, i) => (
          <label key={name} className={clsx("flex h-5 items-center", i === 2 && "text-[#7a7a7a]")}>
            <input
              type="radio"
              name="pick"
              defaultChecked={i === 0}
              disabled={i === 2}
              className="mr-2 size-[9px] appearance-none rounded-full border-2 border-[#2b2b2b] bg-[#2b2b2b] checked:bg-[#d0d0d0]"
            />
            {name}
          </label>
        ))}
      </fieldset>
      <div className="mt-px pl-[10px]">
        {["Highlight Backfaces", "Highlight Nearest Component"].map((name) => (
          <label key={name} className="flex h-5 items-center">
            <span className="mr-[5px] grid size-[13px]">
              <input type="checkbox" defaultChecked className="peer col-start-1 row-start-1 size-[13px] appearance-none rounded-[2px] bg-[#2b2b2b]" />
              <svg viewBox="0 0 13 13" className="pointer-events-none invisible col-start-1 row-start-1 peer-checked:visible" fill="none">
                <path d="M2 7l3 3 6-8" stroke="#e5e5e5" strokeWidth="2" />
              </svg>
            </span>
            {name}
          </label>
        ))}
      </div>
      <div className="mt-2 flex flex-col gap-[6px] pl-[6px]">
        <Constraint label="Camera Based Selection" value="Off" />
        <Constraint label="Symmetry" value="Off" />
        <Constraint label="Selection Constraint" value="Off" extra="0" />
        <Constraint label="Transform Constraint" value="Off" />
      </div>
      <button type="button" className="mt-[11px] mb-px ml-[6px] flex h-5 shrink-0 items-center rounded-[2px] bg-[#3a3a3a] pl-2 font-bold text-[#b8b8b8]">
        <Caret className="mb-1 -rotate-90" color="#eeeeee" />
        <span className="ml-[9px]">Soft Selection</span>
      </button>
      <Group title="Mesh" items={[["Combine", art.combine], ["Separate", art.separate], ["Smooth", art.smooth], ["Boolean", art.boolean]]} />
      <Group title="Components" items={[["Extrude", art.extrude], ["Bevel", art.bevel], ["Bridge", art.bridge], ["Add Divisions", art.divisions]]} />
      <Group title="Tools" items={[["Multi-Cut", art.multicut], ["Target Weld", art.weld], ["Connect", art.connect], ["Quad Draw", art.quad]]} />
      <div className="mt-auto h-px w-[86px] shrink-0 self-center border-t border-dotted border-[#8a8a8a]" />
      <h2 className="-mx-[3px] mt-2 h-5 shrink-0 rounded-[2px] bg-[#3a3a3a] pl-[6px] leading-5 font-bold text-[#b8b8b8]">Custom Shelf</h2>
      <div className="mt-[3px] mb-[7px] h-[30px] shrink-0 border border-[#484848]" />
    </aside>
  );
}

function SideTabs() {
  const tabs = ["Channel Box / Layer Editor", "Modeling Toolkit", "Attribute Editor"];
  return (
    <nav className="flex w-4 shrink-0 flex-col gap-[2px] bg-[#373737] pt-[2px]">
      {tabs.map((t) => (
        <button
          type="button"
          key={t}
          className={clsx(
            "w-4 rounded-r-[3px] pt-[10px] pb-[10px] leading-4 whitespace-nowrap [writing-mode:vertical-rl]",
            t === "Modeling Toolkit" ? "bg-[#444444] text-white" : "border border-l-0 border-[#2b2b2b] text-[#969696]",
          )}
        >
          {t}
        </button>
      ))}
    </nav>
  );
}

/* ---------- bottom bars ---------- */

const playback: [string, ReactNode][] = [
  ["Go to start", <path d="M1 3h2v14H1zM10 3v14l-6-7zM18 3v14l-6-7z" fill={W} />],
  ["Step back frame", <path d="M3 3h2v14H3zM15 3v14l-9-7z" fill={W} />],
  ["Step back key", <><path d="M4 0v20" stroke={W} /><path d="M2.500 3h3v14h-3z" fill="#e08040" /><path d="M15 4v12l-7-6z" fill={W} /></>],
  ["Play backwards", <path d="M16 1v18L4 10z" fill={W} />],
  ["Play forwards", <path d="M4 1v18l12-9z" fill={W} />],
  ["Step forward key", <><path d="M15 0v20" stroke={W} /><path d="M13.500 3h3v14h-3z" fill="#e08040" /><path d="M4 4v12l8-6z" fill={W} /></>],
  ["Step forward frame", <path d="M15 3h2v14h-2zM4 3v14l9-7z" fill={W} />],
  ["Go to end", <path d="M17 3h2v14h-2zM2 3v14l6-7zM10 3v14l6-7z" fill={W} />],
];

function TimeSlider() {
  return (
    <section className="flex h-11 shrink-0 border-t-2 border-[#373737] py-1">
      <Grip />
      <div className="ml-[6px] flex grow bg-[#2b2b2b]">
        <div className="flex w-[6px] items-center justify-end overflow-hidden bg-[#5d5d5d] pt-2 pr-[2px] text-[10px] text-white">0</div>
        <div className="flex grow border-b-2 border-[#383838] pl-[53px]">
          {Array.from({ length: 24 }, (_, i) => (
            <div key={i} className={clsx("text-[10px] text-[#808080]", i < 23 ? "min-w-0 flex-1 basis-0" : "w-[22px]")}>
              <div className="pl-[3px] leading-[13px]">{(i + 1) * 5}</div>
              <div className="h-[17px] w-[2px] bg-[#8c8c8c]" />
            </div>
          ))}
        </div>
      </div>
      <Field label="Current frame" value="0" className="mt-[6px] ml-[6px] h-[18px] w-[88px]" />
      <div className="mt-1 mr-[10px] ml-[6px] flex h-5">
        {playback.map(([name, icon]) => (
          <Tool key={name} label={name} className="w-[23px]">
            <Svg s={18} vb={20}>{icon}</Svg>
          </Tool>
        ))}
      </div>
    </section>
  );
}

function HollowCaret() {
  return (
    <Svg s={10} vb={10}>
      <path d="M1 1h8L5 7z" stroke={W} strokeWidth=".8" fill="#6a6a6a" />
    </Svg>
  );
}

function RangeSlider() {
  return (
    <section className="flex h-[37px] shrink-0 items-start border-t-2 border-[#373737] pt-[5px]">
      <Grip className="-mt-[3px] ml-[3px] h-7 w-[5px]" />
      <Field label="Animation start" value="1" className="ml-[6px] h-[25px] w-[88px]" />
      <Field label="Playback start" value="1" className="ml-2 h-[25px] w-[88px]" />
      <div className="mr-[6px] ml-[7px] h-[25px] grow rounded-[2px] bg-[#373737] pt-[2px] pl-[5px]">
        <div className="flex h-5 w-[61%] items-center rounded-[3px] bg-[#5d5d5d] px-1">
          <button type="button" aria-label="Range start" className="size-[14px] rounded-[4px] bg-[#939393]" />
          <span className="ml-1">1</span>
          <span className="mr-1 ml-auto">120</span>
          <button type="button" aria-label="Range end" className="size-[14px] rounded-[4px] bg-[#939393]" />
        </div>
      </div>
      <Field label="Playback end" value="120" className="h-[25px] w-[88px]" />
      <Field label="Animation end" value="200" className="ml-2 h-[25px] w-[88px]" />
      <div className="flex h-[25px] items-center">
        <Sep className="w-[9px]" />
        <span className="mx-[9px]"><HollowCaret /></span>
        <button type="button" className="h-[25px] w-[102px] rounded-[2px] border border-[#4d4d4d] pl-[5px] text-left">No Character Set</button>
        <span className="mx-[9px]"><HollowCaret /></span>
        <button type="button" className="h-[25px] w-[102px] rounded-[2px] border border-[#4d4d4d] pl-[5px] text-left">No Anim Layer</button>
        <Sep className="w-[21px]" />
        <Dropdown label="Frame rate" value="24 fps" className="ml-[2px] h-5 w-24" />
        <Tool label="Loop" className="ml-3 w-5">
          <Svg s={18} vb={20}>
            <path d="M2 11V8q0-3 3-3h9M18 9v3q0 3-3 3H6" stroke={W} strokeWidth="2.500" />
            <path d="M13 1l6 4-6 4zM7 11l-6 4 6 4z" fill={W} />
          </Svg>
        </Tool>
        <Tool label="Cached playback" on className="ml-[7px] h-[23px] w-6">
          <Svg s={20} vb={20}>
            <path d="M1 3h18v14H1z" fill={O} />
            <path d="M2 5h16M2 15.500h16" stroke="#2b2b2b" strokeWidth="1.500" strokeDasharray="2 1.500" />
            <path d="M3 8h4v5H3zM8 8h4v5H8zM13 8h4v5h-4z" fill="#eee" stroke="#2b2b2b" />
            <path d="M12 0l5 4-5 5z" fill={W} />
          </Svg>
        </Tool>
        <Sep className="w-[21px]" />
        <Tool label="Auto keyframe" className="w-5">
          <Svg s={18} vb={20}>
            <path d="M3 9a7 7 0 0 1 13-3M17 11a7 7 0 0 1-13 3" stroke={W} strokeWidth="2" />
            <path d="M18 2v6h-6zM2 18v-6h6z" fill={W} />
            <path d="M10 5v10" stroke="#e08040" strokeWidth="2.500" />
          </Svg>
        </Tool>
        <Tool label="Animation preferences" className="mr-[11px] ml-2 w-5">
          <Svg s={20} vb={20}>
            {gear(5, 5, W, 2.5)}
            <circle cx="15" cy="5" r="2" fill="#e08040" />
            <path d="M7 9l5-2 3 3 3 1M12 8l-2 5-5 1M11 13l4 2-1 4" stroke="#e08040" strokeWidth="2" />
          </Svg>
        </Tool>
      </div>
    </section>
  );
}

function CommandLine() {
  return (
    <section className="flex h-[34px] shrink-0 items-center border-t-2 border-[#373737] py-[3px]">
      <Grip />
      <label htmlFor="mel" className="ml-4 w-[35px] text-white">MEL</label>
      <input id="mel" className="h-[22px] w-[664px] rounded-[2px] bg-[#2b2b2b] px-1 outline-none" />
      <input aria-label="Result" readOnly className="ml-2 h-6 min-w-0 grow bg-[#2b2b2b] px-1 outline-none" />
      <Tool label="Script editor" className="mr-2 ml-[5px] w-5">
        <Svg s={20} vb={20}>
          <path d="M1 1h18v3H1zM1 5h18v15H1z" fill={W} />
          <path d="M2.500 2.500h5" stroke={K} strokeDasharray="1 1" />
          <text x="10" y="16" fontSize="11" fontWeight="700" textAnchor="middle" fill={K}>{"{;}"}</text>
        </Svg>
      </Tool>
    </section>
  );
}

export default function App() {
  return (
    <div className="flex h-screen flex-col overflow-hidden bg-[#444444] font-['Noto_Sans','Open_Sans',sans-serif] text-[11px] leading-4 text-[#c8c8c8]">
      <StatusLine />
      <Shelf />
      <div className="flex min-h-0 grow border-t-2 border-[#373737]">
        <Toolbox />
        <Outliner />
        <Viewport />
        <Toolkit />
        <SideTabs />
      </div>
      <TimeSlider />
      <RangeSlider />
      <CommandLine />
      <footer className="flex h-[26px] shrink-0 items-center border-t-2 border-[#373737]">
        <Grip />
        <span className="ml-4 text-[10px]">Select Tool: select an object</span>
      </footer>
    </div>
  );
}
